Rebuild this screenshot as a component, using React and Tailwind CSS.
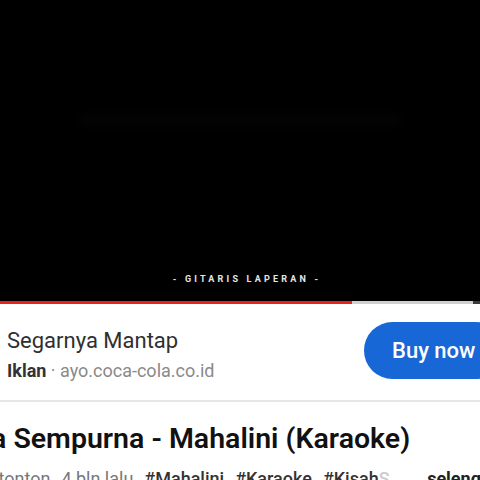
export default function App() {
  return (
    <div className="w-[480px] h-[480px] overflow-hidden bg-white" style={{ fontFamily: "Roboto, 'Noto Sans', sans-serif" }}>
      <div className="h-[301px] bg-black flex flex-col items-center relative">
        <div className="mt-[113px] w-[320px] h-[14px] bg-[#030303] rounded-sm blur-[3px]" />
        <div className="mt-auto mb-[17px] text-[9px] font-bold tracking-[3.2px] text-[#e6e6e6] leading-none pl-[14px]">- GITARIS LAPERAN -</div>
      </div>
      <div className="flex h-[3px]">
        <div className="w-[352px] bg-[#e8231f]" />
        <div className="flex-1 bg-[#cfcfcf]" />
        <div className="w-[7px] bg-[#3a3a3a]" />
      </div>
      <div className="h-[98px] flex items-center justify-between border-b-2 border-[#e6e6e8]">
        <div className="pl-[7px] flex flex-col">
          <div className="text-[22px] text-[#2f2f2f] leading-[26px] mt-[6px]">Segarnya Mantap</div>
          <div className="text-[18px] leading-[22px] mt-[6px] text-[#8a8a8a]"><span className="font-bold text-[#333]">Iklan</span> · ayo.coca-cola.co.id</div>
        </div>
        <div className="h-[57px] w-[140px] mr-[-24px] mt-[-4px] rounded-full bg-[#1867d6] text-white text-[22px] font-medium flex items-center pl-[28px] whitespace-nowrap">Buy now</div>
      </div>
      <div className="pt-[20px] whitespace-nowrap">
        <div className="text-[28.5px] font-semibold text-[#111] leading-[34px] ml-[-9px]">a Sempurna - Mahalini (Karaoke)</div>
        <div className="mt-[12px] text-[18px] leading-[22px] text-[#777] ml-[-16px] flex">
          <span className="flex gap-[11px]"><span>ditonton</span><span>4 bln lalu</span><span className="text-[#333] font-medium">#Mahalini</span><span className="text-[#333] font-medium">#Karaoke</span><span className="text-[#333] font-medium">#Kisah<span className="text-[#ccc]">S</span></span></span>
          <span className="ml-auto font-bold text-[#222] mr-[-59px]">selengkapnya</span>
        </div>
      </div>
    </div>
  );
}
